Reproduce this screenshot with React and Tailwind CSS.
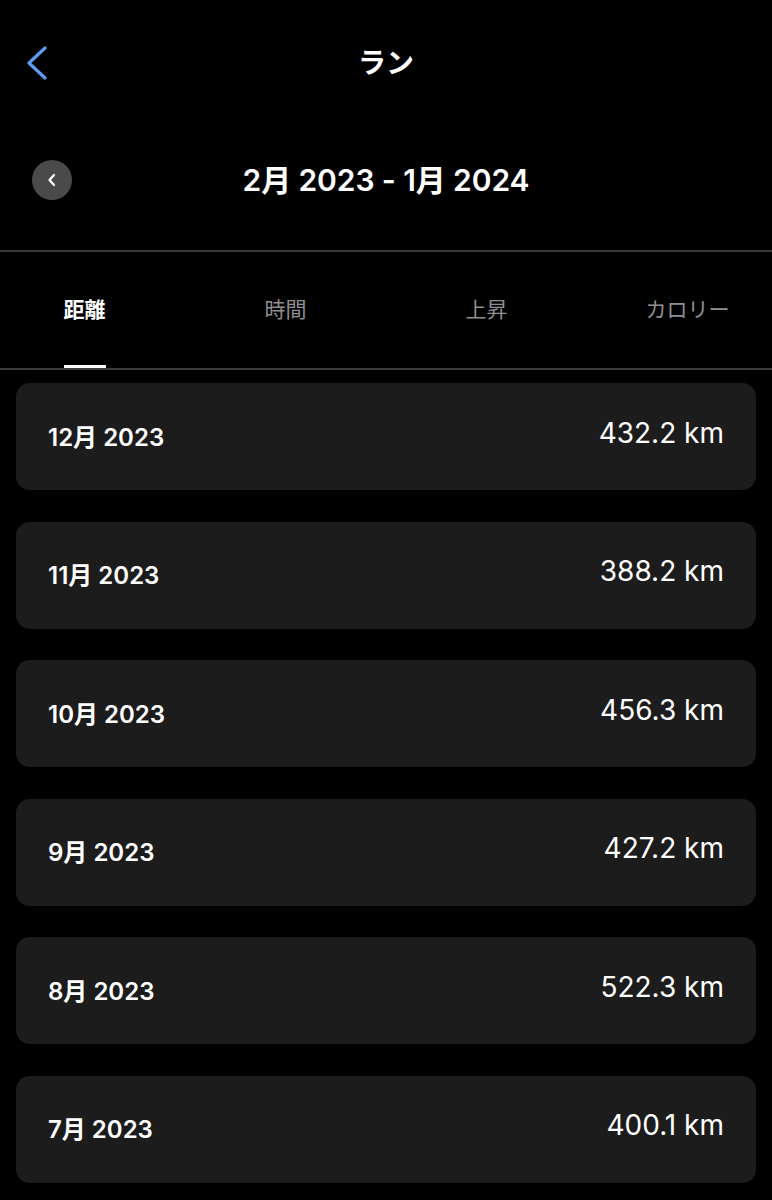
import React from 'react';

const font = { fontFamily: '"Inter", "Noto Sans CJK JP", sans-serif' };

const months = [
  { label: '12月 2023', value: '432.2 km' },
  { label: '11月 2023', value: '388.2 km' },
  { label: '10月 2023', value: '456.3 km' },
  { label: '9月 2023', value: '427.2 km' },
  { label: '8月 2023', value: '522.3 km' },
  { label: '7月 2023', value: '400.1 km' },
];

const tabs = ['距離', '時間', '上昇', 'カロリー'];

export default function App() {
  return (
    <div className="w-[772px] h-[1200px] bg-black text-white overflow-hidden font-['Inter','Noto_Sans_CJK_JP',sans-serif]" style={font}>
      {/* top bar */}
      <div className="h-[126px] grid grid-cols-[1fr_auto_1fr] items-center px-[26px]">
        <button className="w-[24px] h-[36px] flex items-center">
          <svg width="22" height="34" viewBox="0 0 22 34" fill="none">
            <polyline points="19,2 3,17 19,32" stroke="#5b9cf4" strokeWidth="3.2" strokeLinecap="round" strokeLinejoin="round" />
          </svg>
        </button>
        <h1 className="text-[28px] font-bold leading-none">ラン</h1>
        <div />
      </div>

      {/* date range */}
      <div className="grid grid-cols-[1fr_auto_1fr] items-center px-[32px] pt-[34px] pb-[50px]">
        <button className="w-[40px] h-[40px] rounded-full bg-[#4a4a4a] flex items-center justify-center">
          <svg width="12" height="16" viewBox="0 0 12 16" fill="none">
            <polyline points="8,3 3.5,8 8,13" stroke="white" strokeWidth="2.2" strokeLinecap="round" strokeLinejoin="round" />
          </svg>
        </button>
        <div className="text-[30px] font-semibold leading-none tracking-[-0.1px]">2月 2023 - 1月 2024</div>
        <div />
      </div>

      <div className="h-[2px] bg-[#3a3a3c]" />

      {/* tabs */}
      <div className="flex ml-[-16px] h-[116px]">
        {tabs.map((t, i) => (
          <div key={t} className="w-[201px] shrink-0 flex flex-col items-center">
            <div className="relative flex-1 flex flex-col items-center justify-center">
              <span className={i === 0 ? 'text-[21px] font-semibold text-white' : 'text-[21px] text-[#8e8e93]'}>{t}</span>
              {i === 0 && <div className="absolute bottom-0 left-0 right-0 h-[3px] bg-white" />}
            </div>
          </div>
        ))}
      </div>
      <div className="h-[2px] bg-[#3a3a3c]" />

      {/* month list */}
      <div className="flex flex-col gap-[31.6px] px-[16px] pt-[13px]">
        {months.map((m) => (
          <div key={m.label} className="h-[107px] rounded-[14px] bg-[#1c1c1c] flex items-center justify-between pl-[32px] pr-[32px]">
            <span className="text-[24px] font-semibold mt-[2px]">{m.label}</span>
            <span className="text-[28px] mt-[-8px]">{m.value}</span>
          </div>
        ))}
      </div>
    </div>
  );
}
